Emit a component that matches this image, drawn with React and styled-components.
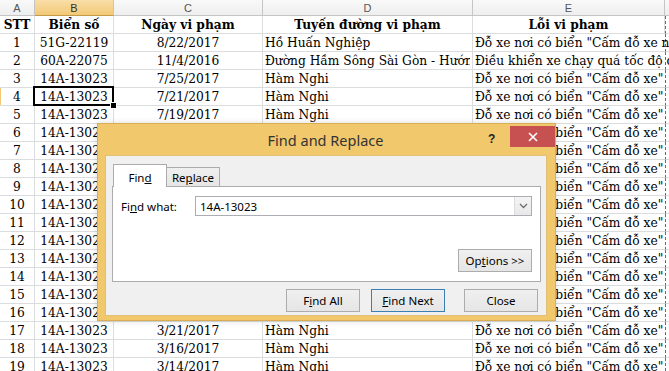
import React from 'react';
import styled, { createGlobalStyle, css } from 'styled-components';

const Global = createGlobalStyle`
  html, body {
    margin: 0;
    padding: 0;
    background: #fff;
    overflow: hidden;
  }
`;

const P = 'Đỗ xe nơi có biển "Cấm đỗ xe"';

const rows = [
  ['1', '51G-22119', '8/22/2017', 'Hồ Huấn Nghiệp', 'Đỗ xe nơi có biển "Cấm đỗ xe ngày chẵn"'],
  ['2', '60A-22075', '11/4/2016', 'Đường Hầm Sông Sài Gòn - Hướng Thủ Thiêm', 'Điều khiển xe chạy quá tốc độ quy định'],
  ['3', '14A-13023', '7/25/2017', 'Hàm Nghi', P],
  ['4', '14A-13023', '7/21/2017', 'Hàm Nghi', P],
  ['5', '14A-13023', '7/19/2017', 'Hàm Nghi', P],
  ['6', '14A-13023', '7/14/2017', 'Hàm Nghi', P],
  ['7', '14A-13023', '7/12/2017', 'Hàm Nghi', P],
  ['8', '14A-13023', '7/5/2017', 'Hàm Nghi', P],
  ['9', '14A-13023', '6/30/2017', 'Hàm Nghi', P],
  ['10', '14A-13023', '6/27/2017', 'Hàm Nghi', P],
  ['11', '14A-13023', '6/20/2017', 'Hàm Nghi', P],
  ['12', '14A-13023', '6/12/2017', 'Hàm Nghi', P],
  ['13', '14A-13023', '5/30/2017', 'Hàm Nghi', P],
  ['14', '14A-13023', '5/22/2017', 'Hàm Nghi', P],
  ['15', '14A-13023', '4/11/2017', 'Hàm Nghi', P],
  ['16', '14A-13023', '3/28/2017', 'Hàm Nghi', P],
  ['17', '14A-13023', '3/21/2017', 'Hàm Nghi', P],
  ['18', '14A-13023', '3/16/2017', 'Hàm Nghi', P],
  ['19', '14A-13023', '3/14/2017', 'Hàm Nghi', P],
  ['20', '14A-13023', '3/10/2017', 'Hàm Nghi', P],
];

const headers = ['STT', 'Biển số', 'Ngày vi phạm', 'Tuyến đường vi phạm', 'Lỗi vi phạm'];
const letters = ['A', 'B', 'C', 'D', 'E'];
const aligns = ['center', 'center', 'center', 'left', 'left'];

function App() {
  return (
    <Screen>
      <Global />
      <Sheet>
        {letters.map((l) => (
          <ColHead key={l} $active={l === 'B'}>{l}</ColHead>
        ))}
        <ColHead $edge />

        {headers.map((h) => (
          <Cell key={h} $align="center" $bold>{h}</Cell>
        ))}
        <BreakCell />

        {rows.map((r, ri) => (
          <React.Fragment key={ri}>
            {r.map((v, ci) => (
              <Cell
                key={ci}
                $align={aligns[ci]}
                $spill={ci === 4}
                $selected={ri === 3 && ci === 1}
                $rowMark={ri === 3 && ci === 0}
              >
                <CellText $spill={ci === 4}>{v}</CellText>
              </Cell>
            ))}
            <BreakCell />
          </React.Fragment>
        ))}
      </Sheet>

      <Dialog>
        <TitleBar>
          <Title>Find and Replace</Title>
          <Help>?</Help>
          <CloseX>
            <svg width="10" height="10" viewBox="0 0 10 10">
              <path d="M1 1 L9 9 M9 1 L1 9" stroke="#fff" strokeWidth="1.6" />
            </svg>
          </CloseX>
        </TitleBar>
        <Body>
          <Tabs>
            <Tab $active>Fin<u>d</u></Tab>
            <Tab>Re<u>p</u>lace</Tab>
          </Tabs>
          <Panel>
            <FieldRow>
              <Label>Fi<u>n</u>d what:</Label>
              <Combo>
                <ComboText>14A-13023</ComboText>
                <ComboArrow>
                  <svg width="9" height="6" viewBox="0 0 9 6">
                    <path d="M1 1 L4.5 4.5 L8 1" stroke="#6d6d6d" strokeWidth="1.3" fill="none" />
                  </svg>
                </ComboArrow>
              </Combo>
            </FieldRow>
            <OptionsRow>
              <Button>Op<u>t</u>ions &gt;&gt;</Button>
            </OptionsRow>
          </Panel>
          <Buttons>
            <Button>F<u>i</u>nd All</Button>
            <Button $default><u>F</u>ind Next</Button>
            <Button $gap>Close</Button>
          </Buttons>
        </Body>
      </Dialog>
    </Screen>
  );
}

export default App;

const Screen = styled.div`
  position: relative;
  width: 669px;
  height: 371px;
  overflow: hidden;
  background: #fff;
`;

const Sheet = styled.div`
  display: grid;
  grid-template-columns: 35px 79px 149px 210px 192px 4px;
  grid-template-rows: 16px;
  grid-auto-rows: 18px;
`;

const ColHead = styled.div`
  box-sizing: border-box;
  border-right: 1px solid #c5c5c5;
  border-bottom: 1px solid #c5c5c5;
  background: linear-gradient(#f9f9f9, #eeeeee);
  font-family: 'Liberation Sans', Arial, sans-serif;
  font-size: 11px;
  color: #555;
  display: flex;
  align-items: center;
  justify-content: center;
  ${(p) =>
    p.$active &&
    css`
      background: linear-gradient(#f9dea8, #f3c976);
      border-bottom: 1px solid #c29a4a;
      color: #333;
    `}
  ${(p) =>
    p.$edge &&
    css`
      border-right: none;
    `}
`;

const Cell = styled.div`
  position: relative;
  box-sizing: border-box;
  border-right: 1px solid #dadcdd;
  border-bottom: 1px solid #dadcdd;
  font-family: 'DejaVu Serif Condensed', 'DejaVu Serif', serif;
  font-stretch: condensed;
  font-size: 13.6px;
  color: #000;
  display: flex;
  align-items: flex-end;
  justify-content: ${(p) => (p.$align === 'center' ? 'center' : 'flex-start')};
  padding: 0 2px 0 2px;
  line-height: 17px;
  overflow: hidden;
  white-space: nowrap;
  font-weight: ${(p) => (p.$bold ? 700 : 400)};
  ${(p) =>
    p.$spill &&
    css`
      overflow: visible;
      border-right: none;
    `}
  ${(p) =>
    p.$selected &&
    css`
      overflow: visible;
      z-index: 2;
      &::after {
        content: '';
        position: absolute;
        left: -2px;
        top: -2px;
        right: -1px;
        bottom: -1px;
        border: 2px solid #000;
      }
      &::before {
        content: '';
        position: absolute;
        right: -4px;
        bottom: -4px;
        width: 5px;
        height: 5px;
        background: #000;
        border: 1px solid #fff;
        z-index: 3;
      }
    `}
  ${(p) =>
    p.$rowMark &&
    css`
      box-shadow: inset 1px 0 0 #f3c976;
    `}
`;

const CellText = styled.span`
  display: block;
  overflow: ${(p) => (p.$spill ? 'visible' : 'hidden')};
  max-width: 100%;
`;

const BreakCell = styled.div`
  box-sizing: border-box;
  border-left: 1px dashed #6a6a6a;
  border-bottom: 1px solid #dadcdd;
`;

const Dialog = styled.div`
  position: absolute;
  left: 97px;
  top: 123px;
  width: 459px;
  height: 198px;
  box-sizing: border-box;
  background: #f1c86c;
  border: 1px solid #d9ae52;
  padding: 0 8px 4px 7px;
  display: flex;
  flex-direction: column;
  box-shadow: 0 0 6px rgba(0, 0, 0, 0.15);
  font-family: 'Noto Sans', 'Open Sans', sans-serif;
`;

const TitleBar = styled.div`
  height: 31px;
  display: flex;
  align-items: flex-start;
  flex-shrink: 0;
`;

const Title = styled.div`
  flex: 1;
  text-align: center;
  font-size: 14.5px;
  color: #333;
  padding: 6px 0 0 58px;
`;

const Help = styled.div`
  font-family: 'Liberation Sans', Arial, sans-serif;
  font-weight: 700;
  font-size: 12px;
  color: #222;
  width: 14px;
  margin: 8px 8px 0 0;
`;

const CloseX = styled.div`
  width: 45px;
  height: 21px;
  margin: 2px -8px 0 0;
  background: #c75050;
  display: flex;
  align-items: center;
  justify-content: center;
`;

const Body = styled.div`
  flex: 1;
  background: #f0f0f0;
  border: 1px solid #e2c078;
  padding: 8px 8px 0 6px;
  display: flex;
  flex-direction: column;
`;

const Tabs = styled.div`
  display: flex;
  align-items: flex-end;
  padding-left: 1px;
  height: 22px;
  position: relative;
  z-index: 1;
`;

const Tab = styled.div`
  box-sizing: border-box;
  font-size: 11.5px;
  color: #000;
  border: 1px solid #acacac;
  display: flex;
  align-items: center;
  justify-content: center;
  ${(p) =>
    p.$active
      ? css`
          width: 54px;
          height: 23px;
          background: #fff;
          border-bottom: none;
          margin-bottom: -1px;
          padding-top: 2px;
        `
      : css`
          width: 53px;
          height: 19px;
          background: linear-gradient(#f0f0f0, #e5e5e5);
          border-left: none;
          border-bottom: none;
        `}
`;

const Panel = styled.div`
  box-sizing: border-box;
  width: 429px;
  height: 96px;
  background: #fff;
  border: 1px solid #acacac;
  padding: 9px 8px 0 8px;
  display: flex;
  flex-direction: column;
`;

const FieldRow = styled.div`
  display: flex;
  align-items: center;
`;

const Label = styled.div`
  width: 74px;
  font-size: 11.5px;
  color: #000;
`;

const Combo = styled.div`
  box-sizing: border-box;
  flex: 1;
  height: 20px;
  border: 1px solid #abadb3;
  display: flex;
  align-items: center;
  background: #fff;
`;

const ComboText = styled.div`
  flex: 1;
  font-size: 11.5px;
  padding-left: 4px;
  color: #000;
`;

const ComboArrow = styled.div`
  box-sizing: border-box;
  width: 17px;
  height: 18px;
  border-left: 1px solid #dcdcdc;
  background: linear-gradient(#f4f4f4, #e8e8e8);
  display: flex;
  align-items: center;
  justify-content: center;
`;

const OptionsRow = styled.div`
  display: flex;
  justify-content: flex-end;
  margin-top: 33px;
`;

const Buttons = styled.div`
  display: flex;
  justify-content: flex-end;
  gap: 11px;
  margin-top: 7px;
`;

const Button = styled.div`
  box-sizing: border-box;
  width: 74px;
  height: 23px;
  border: 1px solid ${(p) => (p.$default ? '#3c7fb1' : '#acacac')};
  background: linear-gradient(#f0f0f0, #e5e5e5);
  font-size: 11.5px;
  color: #000;
  display: flex;
  align-items: center;
  justify-content: center;
  ${(p) =>
    p.$gap &&
    css`
      margin-left: 8px;
    `}
`;
